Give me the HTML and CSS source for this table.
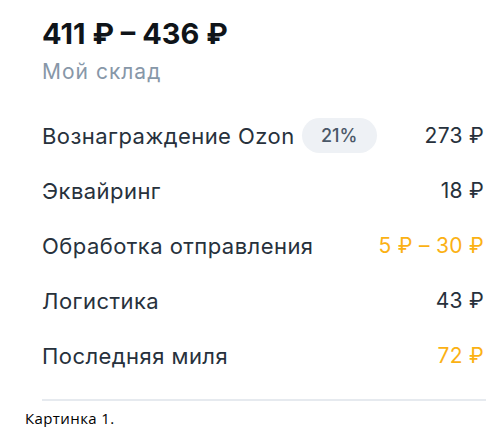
FILE: index.html
```html
<!DOCTYPE html>
<html lang="ru">
<head>
<meta charset="utf-8">
<link rel="stylesheet" href="styles.css">
</head>
<body>
<div class="card">
  <div class="title">411 ₽ – 436 ₽</div>
  <div class="subtitle">Мой склад</div>
  <div class="rows">
    <div class="row">
      <div class="label">Вознаграждение Ozon <span class="badge">21%</span></div>
      <div class="value">273 ₽</div>
    </div>
    <div class="row">
      <div class="label">Эквайринг</div>
      <div class="value">18 ₽</div>
    </div>
    <div class="row">
      <div class="label">Обработка отправления</div>
      <div class="value accent">5 ₽ – 30 ₽</div>
    </div>
    <div class="row">
      <div class="label">Логистика</div>
      <div class="value">43 ₽</div>
    </div>
    <div class="row">
      <div class="label">Последняя миля</div>
      <div class="value accent">72 ₽</div>
    </div>
  </div>
  <div class="divider"></div>
</div>
<div class="caption">Картинка 1.</div>
</body>
</html>
```

FILE: styles.css
```css
html, body {
  margin: 0;
  padding: 0;
  background: #ffffff;
}
.card {
  width: 444px;
  margin-left: 42px;
  padding-top: 17px;
  font-family: Inter, "Noto Sans", sans-serif;
  color: #27313c;
}
.title {
  font-size: 29px;
  line-height: 34px;
  font-weight: 700;
  color: #0f1419;
}
.subtitle {
  margin-top: 9px;
  font-size: 21px;
  line-height: 24px;
  letter-spacing: 1px;
  color: #8797a8;
}
.rows {
  margin-top: 24px;
  display: flex;
  flex-direction: column;
}
.row {
  height: 55px;
  display: flex;
  align-items: center;
  justify-content: space-between;
}
.label {
  display: flex;
  align-items: center;
  gap: 7px;
  font-size: 22px;
  letter-spacing: 0.45px;
}
.badge {
  display: inline-flex;
  align-items: center;
  justify-content: center;
  width: 75px;
  height: 35px;
  border-radius: 18px;
  background: #eef1f5;
  color: #4a5868;
  font-size: 18px;
  font-weight: 500;
  letter-spacing: 0;
}
.value {
  padding-right: 2px;
  font-size: 21px;
  letter-spacing: 0.3px;
}
.accent {
  color: #fbb114;
}
.divider {
  margin-top: 16px;
  height: 2px;
  background: #e6eaef;
}
.caption {
  margin: 8px 0 0 25px;
  font-family: "Open Sans", "Liberation Sans", sans-serif;
  font-size: 15px;
  line-height: 18px;
  letter-spacing: 0.4px;
  color: #000;
}
```
